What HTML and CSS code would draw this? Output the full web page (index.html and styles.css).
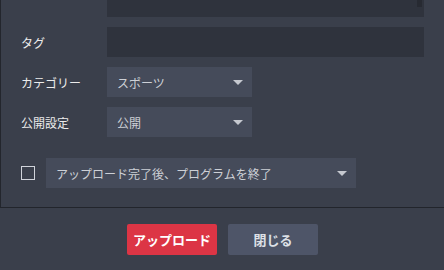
FILE: index.html
```html
<!DOCTYPE html>
<html lang="ja">
<head>
<meta charset="utf-8">
<link rel="stylesheet" href="styles.css">
</head>
<body>
<div class="dialog">
  <div class="content">
    <div class="row row-desc">
      <div class="label"></div>
      <div class="textarea"><span class="thumb"></span></div>
    </div>
    <div class="row">
      <div class="label">タグ</div>
      <div class="input"></div>
    </div>
    <div class="row">
      <div class="label">カテゴリー</div>
      <div class="select"><span>スポーツ</span><i class="caret"></i></div>
    </div>
    <div class="row">
      <div class="label">公開設定</div>
      <div class="select"><span>公開</span><i class="caret"></i></div>
    </div>
    <div class="row row-check">
      <span class="checkbox"></span>
      <div class="select select-wide"><span>アップロード完了後、プログラムを終了</span><i class="caret"></i></div>
    </div>
  </div>
  <div class="footer">
    <button class="btn btn-primary">アップロード</button>
    <button class="btn btn-secondary">閉じる</button>
  </div>
</div>
</body>
</html>
```
FILE: styles.css
```css
html, body {
  margin: 0;
  padding: 0;
  background: #3a3f4b;
  font-family: "Noto Sans CJK JP", "Noto Sans", sans-serif;
  font-size: 12px;
}
.dialog {
  width: 444px;
  height: 270px;
  display: flex;
  flex-direction: column;
}
.content {
  height: 208px;
  box-sizing: border-box;
  border-left: 1px solid #23262d;
  border-bottom: 1px solid #22252c;
  padding: 0 20px 0 20px;
  display: flex;
  flex-direction: column;
  gap: 10px;
}
.row {
  display: flex;
  align-items: center;
  height: 30px;
}
.row-desc {
  height: 17px;
}
.row-check {
  margin-top: 11px;
}
.label {
  width: 86px;
  color: #ececec;
  flex: none;
}
.textarea {
  position: relative;
  flex: 1;
  height: 17px;
  background: #2f333d;
}
.thumb {
  position: absolute;
  right: 2px;
  top: 0;
  width: 5px;
  height: 7px;
  background: #272a32;
}
.input {
  flex: 1;
  height: 30px;
  background: #2f333d;
}
.select {
  width: 145px;
  height: 30px;
  background: #454b5a;
  color: #cdd0d6;
  display: flex;
  align-items: center;
  justify-content: space-between;
  box-sizing: border-box;
  padding: 0 9px 0 10px;
}
.select-wide {
  width: 310px;
}
.caret {
  width: 0;
  height: 0;
  border-left: 5px solid transparent;
  border-right: 5px solid transparent;
  border-top: 5px solid #c6c9d0;
}
.checkbox {
  width: 14px;
  height: 14px;
  box-sizing: border-box;
  border: 1px solid #d0d3da;
  margin-right: 11px;
  flex: none;
}
.footer {
  display: flex;
  justify-content: center;
  gap: 11px;
  padding-top: 16px;
  padding-left: 1px;
}
.btn {
  width: 90px;
  height: 31px;
  border: none;
  border-radius: 2px;
  font-family: inherit;
  font-size: 13px;
  font-weight: bold;
  padding: 0;
}
.btn-primary {
  background: #dc3545;
  color: #ffffff;
}
.btn-secondary {
  background: #4e5568;
  color: #dde0e6;
}
```
